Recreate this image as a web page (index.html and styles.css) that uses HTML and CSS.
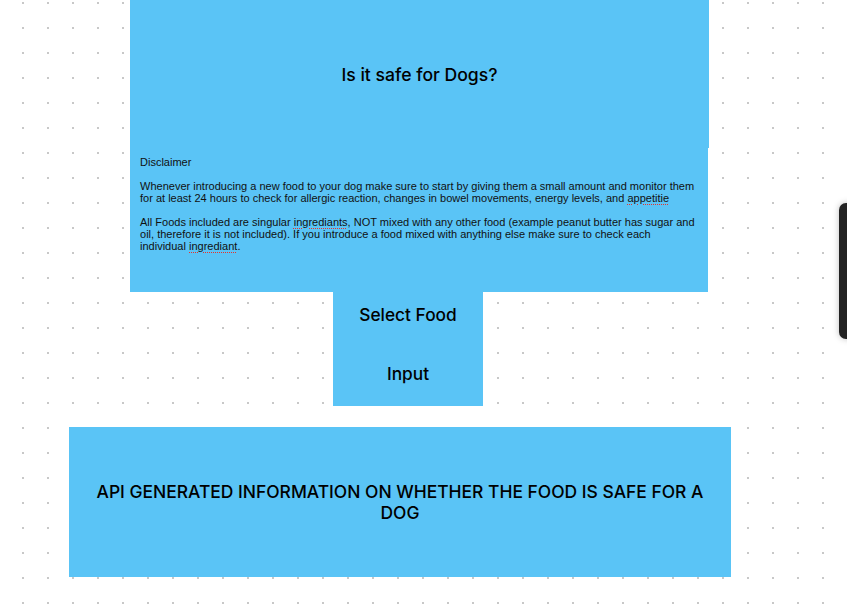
FILE: index.html
```html
<!DOCTYPE html>
<html>
<head>
<meta charset="utf-8">
<link rel="stylesheet" href="styles.css">
</head>
<body>
<main class="canvas">
  <section class="title-box">
    <h1 class="title">Is it safe for Dogs?</h1>
  </section>
  <section class="disclaimer">
    <p>Disclaimer</p>
    <p>Whenever introducing a new food to your dog make sure to start by giving them a small amount and monitor them<br>for at least 24 hours to check for allergic reaction, changes in bowel movements, energy levels, and <span class="typo">appetitie</span></p>
    <p>All Foods included are singular <span class="typo">ingrediants</span>, NOT mixed with any other food (example peanut butter has sugar and<br>oil, therefore it is not included). If you introduce a food mixed with anything else make sure to check each<br>individual <span class="typo">ingrediant</span>.</p>
  </section>
  <section class="select-box">
    <div class="select-label">Select Food</div>
    <div class="select-label">Input</div>
  </section>
  <section class="api-box">
    <div class="api-text">API GENERATED INFORMATION ON WHETHER THE FOOD IS SAFE FOR A<br>DOG</div>
  </section>
</main>
<div class="side-panel"></div>
</body>
</html>
```
FILE: styles.css
```css
html, body {
  margin: 0;
  padding: 0;
}
body {
  width: 847px;
  height: 615px;
  overflow: hidden;
  background-color: #ffffff;
  background-image: conic-gradient(at 2px 2px, transparent 270deg, #c8c8c8 0);
  background-size: 25px 25px;
  background-position: 22px 2px;
  font-family: "Inter", "Liberation Sans", sans-serif;
  color: #000;
  position: relative;
}
.canvas {
  display: flex;
  flex-direction: column;
  align-items: flex-start;
}
.title-box {
  margin-left: 130px;
  width: 579px;
  height: 148px;
  background: #5ac4f6;
  display: flex;
  align-items: center;
  justify-content: center;
}
.title {
  margin: 0;
  font-size: 17.6px;
  font-weight: 500;
  line-height: 22px;
  padding-top: 1px;
}
.disclaimer {
  margin-left: 130px;
  width: 578px;
  height: 144px;
  box-sizing: border-box;
  padding: 8px 10px 0 10px;
  background: #5ac4f6;
  font-family: "Liberation Sans", Arial, sans-serif;
  font-size: 11.03px;
  line-height: 12px;
  color: #111;
}
.disclaimer p {
  margin: 0 0 12px 0;
  white-space: nowrap;
}
.typo {
  text-decoration-line: underline;
  text-decoration-style: dotted;
  text-decoration-color: #e5332a;
  text-decoration-thickness: 1px;
  text-underline-offset: 2px;
}
.select-box {
  margin-left: 333px;
  width: 150px;
  height: 114px;
  box-sizing: border-box;
  padding-top: 13px;
  background: #5ac4f6;
  display: flex;
  flex-direction: column;
  align-items: center;
  gap: 39px;
}
.select-label {
  font-size: 17.3px;
  font-weight: 500;
  line-height: 20px;
}
.api-box {
  margin-top: 21px;
  margin-left: 69px;
  width: 662px;
  height: 150px;
  background: #5ac4f6;
  display: flex;
  align-items: center;
  justify-content: center;
}
.api-text {
  font-size: 17.45px;
  font-weight: 500;
  line-height: 21px;
  text-align: center;
}
.side-panel {
  position: absolute;
  left: 839px;
  top: 203px;
  width: 24px;
  height: 136px;
  background: #232323;
  border-radius: 7px;
  box-shadow: 0 0 6px rgba(0, 0, 0, 0.25);
}
```
